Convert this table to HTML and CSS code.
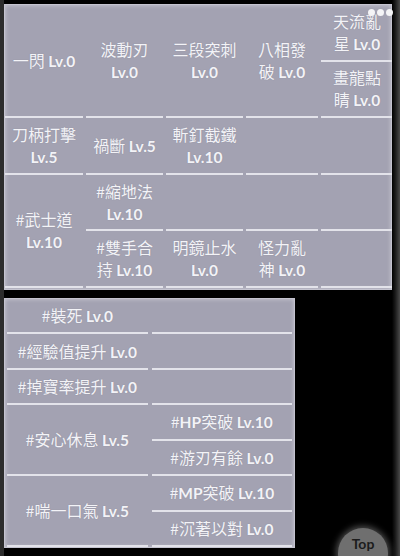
FILE: index.html
```html
<!DOCTYPE html>
<html lang="zh-Hant">
<head>
<meta charset="utf-8">
<title>技能</title>
<link rel="stylesheet" href="styles.css">
</head>
<body>
<div class="screen">
  <div class="edge-left"></div>
  <main class="content">
    <section class="panel skills">
      <div class="cell span2"><p class="txt">一閃 <span class="lv">Lv.0</span></p></div>
      <div class="cell"><p class="txt">刀柄打擊<br><span class="lv">Lv.5</span></p></div>
      <div class="cell span2"><p class="txt">#武士道<br><span class="lv">Lv.10</span></p></div>

      <div class="cell span2"><p class="txt">波動刃<br><span class="lv">Lv.0</span></p></div>
      <div class="cell"><p class="txt">禍斷 <span class="lv">Lv.5</span></p></div>
      <div class="cell"><p class="txt">#縮地法<br><span class="lv">Lv.10</span></p></div>
      <div class="cell"><p class="txt">#雙手合<br>持 <span class="lv">Lv.10</span></p></div>

      <div class="cell span2"><p class="txt">三段突刺<br><span class="lv">Lv.0</span></p></div>
      <div class="cell"><p class="txt">斬釘截鐵<br><span class="lv">Lv.10</span></p></div>
      <div class="cell"></div>
      <div class="cell"><p class="txt">明鏡止水<br><span class="lv">Lv.0</span></p></div>

      <div class="cell span2"><p class="txt">八相發<br>破 <span class="lv">Lv.0</span></p></div>
      <div class="cell"></div>
      <div class="cell"></div>
      <div class="cell"><p class="txt">怪力亂<br>神 <span class="lv">Lv.0</span></p></div>

      <div class="cell"><p class="txt">天流亂<br>星 <span class="lv">Lv.0</span></p></div>
      <div class="cell"><p class="txt">畫龍點<br>睛 <span class="lv">Lv.0</span></p></div>
      <div class="cell"></div>
      <div class="cell"></div>
      <div class="cell"></div>
    </section>

    <section class="panel passives">
      <div class="cell"><p class="txt">#裝死 <span class="lv">Lv.0</span></p></div>
      <div class="cell"><p class="txt">#經驗值提升 <span class="lv">Lv.0</span></p></div>
      <div class="cell"><p class="txt">#掉寶率提升 <span class="lv">Lv.0</span></p></div>
      <div class="cell span2"><p class="txt">#安心休息 <span class="lv">Lv.5</span></p></div>
      <div class="cell span2"><p class="txt">#喘一口氣 <span class="lv">Lv.5</span></p></div>

      <div class="cell"></div>
      <div class="cell"></div>
      <div class="cell"></div>
      <div class="cell"><p class="txt">#<span class="lv">HP</span>突破 <span class="lv">Lv.10</span></p></div>
      <div class="cell"><p class="txt">#游刃有餘 <span class="lv">Lv.0</span></p></div>
      <div class="cell"><p class="txt">#<span class="lv">MP</span>突破 <span class="lv">Lv.10</span></p></div>
      <div class="cell"><p class="txt">#沉著以對 <span class="lv">Lv.0</span></p></div>
    </section>
  </main>
  <div class="edge-right"></div>

  <div class="dots"><span></span><span></span><span></span></div>
  <button class="top-btn" type="button">Top</button>
</div>
</body>
</html>
```

FILE: styles.css
```css
* { box-sizing: border-box; }

html, body {
  margin: 0;
  padding: 0;
  background: #000;
}

body {
  width: 400px;
  height: 556px;
  overflow: hidden;
  font-family: "Noto Sans CJK TC", "Noto Sans", sans-serif;
  color: #f3f3f7;
}

.screen {
  position: relative;
  display: flex;
  width: 400px;
  height: 556px;
  background: #000;
}

.edge-left {
  width: 4px;
  background: #2c2c2c;
}

.edge-right {
  width: 8px;
  background: linear-gradient(to right, #000 0%, #1a1a1a 40%, #4a4a4a 100%);
}

.content {
  flex: 1;
  display: flex;
  flex-direction: column;
  align-items: flex-start;
  gap: 8px;
  padding-top: 4px;
}

.panel {
  display: grid;
  grid-auto-flow: column;
  background: #a3a2b2;
  border: 1px solid #c4c3cf;
  box-shadow: inset 0 0 4px rgba(255, 255, 255, 0.45);
}

.skills {
  width: 388px;
  height: 286px;
  grid-template-columns: 78px 77px 77px 72px 72px;
  grid-template-rows: repeat(5, 1fr);
  column-gap: 3px;
  padding: 0 0 1px 0;
}

.passives {
  width: 291px;
  height: 250px;
  grid-template-columns: 1fr 1fr;
  grid-template-rows: repeat(7, 1fr);
  column-gap: 4px;
  padding: 0 2px 0 2px;
}

.cell {
  display: flex;
  align-items: center;
  justify-content: center;
  border-bottom: 2px solid #e3e3ea;
}

.txt {
  margin: 0;
  text-align: center;
  font-size: 16px;
  line-height: 22px;
  text-shadow: 0 0 1px rgba(90, 90, 110, 0.35);
  white-space: nowrap;
}

.lv {
  font-family: Lato, "Noto Sans", sans-serif;
  font-weight: 700;
  font-size: 15.5px;
}

.span2 {
  grid-row: span 2;
}

.dots {
  position: absolute;
  top: 9px;
  right: 7px;
  display: flex;
  gap: 2px;
}

.dots span {
  width: 7px;
  height: 7px;
  border-radius: 50%;
  background: #f4f4f6;
}

.top-btn {
  position: absolute;
  left: 338px;
  top: 528px;
  width: 50px;
  height: 50px;
  border-radius: 50%;
  border: none;
  padding: 0 0 20px 0;
  background: #6f6f6f;
  box-shadow: 0 0 6px 2px rgba(140, 140, 140, 0.55);
  color: #1c1c1c;
  font-family: Lato, "Noto Sans", sans-serif;
  font-size: 14px;
  font-weight: 700;
}
```
